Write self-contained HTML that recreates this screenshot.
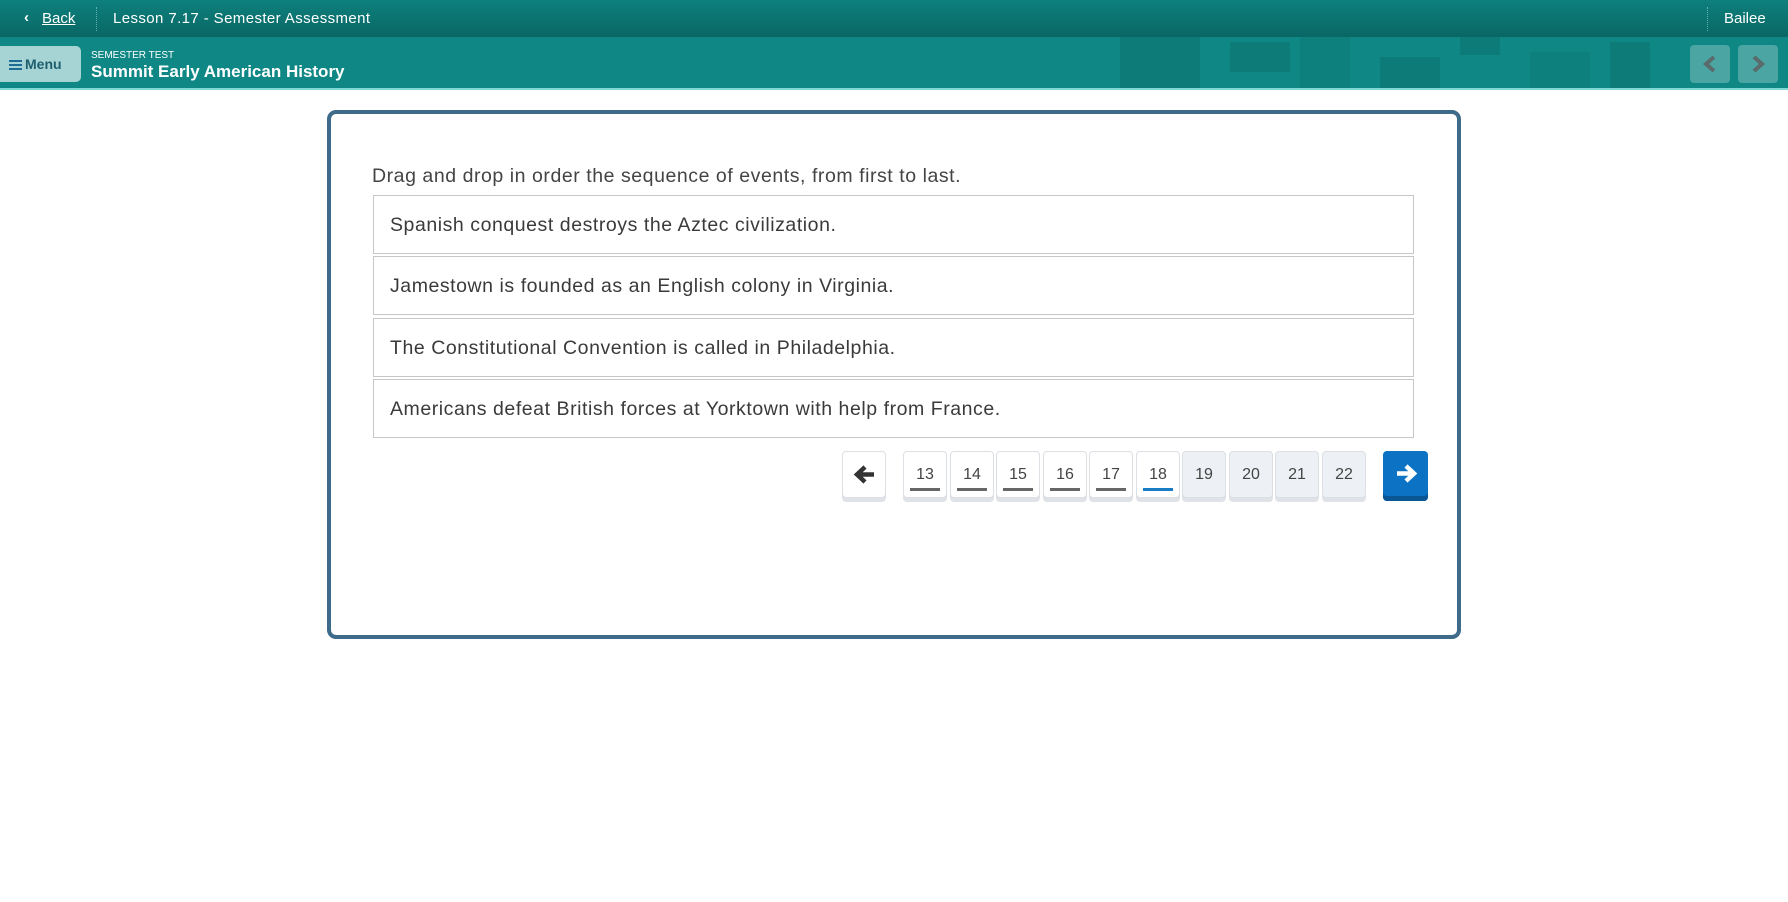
<!DOCTYPE html>
<html><head><meta charset="utf-8"><style>
*{box-sizing:border-box;margin:0;padding:0}
body{width:1788px;height:902px;background:#fff;font-family:"Liberation Sans",sans-serif;position:relative;overflow:hidden;color:#333}
.top{position:absolute;left:0;top:0;width:1788px;height:37px;background:linear-gradient(#0e807d,#096764);color:#fff;font-size:15px}
.sub{position:absolute;left:0;top:37px;width:1788px;height:53px;background:#0f8784;border-bottom:2px solid #7fd8d6;overflow:hidden}
.patch{position:absolute;background:#0b6f6d;opacity:.45}
.card{position:absolute;left:327px;top:110px;width:1134px;height:529px;border:4px solid #3e6b8a;border-radius:9px}
.opt{position:absolute;left:373px;width:1041px;height:59px;border:1px solid #c6c6c6;font-size:19.5px;letter-spacing:0.55px;line-height:58px;padding-left:16px;color:#3a3a3a}
.nb{position:absolute;top:451px;width:44px;height:47px;border:1px solid #dcdfe3;border-radius:4px;background:#fff;box-shadow:0 4px 0 #dfe2e6;font-size:16px;text-align:center;line-height:45px;color:#444}
.nb.u{background:#edf0f4}
.nb .l{position:absolute;left:6px;right:6px;bottom:6px;height:3px;background:#666}
.arr{position:absolute;top:45px;width:40px;height:38px;background:rgba(255,255,255,.25);border-radius:4px}
</style></head><body>
<div class="top">
 <span style="position:absolute;left:24px;top:9px;font-weight:bold">&#8249;</span>
 <span style="position:absolute;left:42px;top:10px;text-decoration:underline">Back</span>
 <span style="position:absolute;left:96px;top:7px;height:24px;border-left:1px dotted #5fb3b1"></span>
 <span style="position:absolute;left:113px;top:10px;letter-spacing:0.4px">Lesson 7.17 - Semester Assessment</span>
 <span style="position:absolute;left:1707px;top:7px;height:24px;border-left:1px dotted #5fb3b1"></span>
 <span style="position:absolute;left:1724px;top:10px">Bailee</span>
</div>
<div class="sub">
 <div class="patch" style="left:1120px;top:0;width:80px;height:53px"></div>
 <div class="patch" style="left:1230px;top:5px;width:60px;height:30px"></div>
 <div class="patch" style="left:1300px;top:0;width:50px;height:53px;opacity:.3"></div>
 <div class="patch" style="left:1380px;top:20px;width:60px;height:33px"></div>
 <div class="patch" style="left:1460px;top:0;width:40px;height:18px"></div>
 <div class="patch" style="left:1530px;top:15px;width:60px;height:38px;opacity:.3"></div>
 <div class="patch" style="left:1610px;top:5px;width:40px;height:48px"></div>
 <div style="position:absolute;left:0;top:9px;width:81px;height:36px;background:#a6d3d4;border-radius:0 5px 5px 0;color:#1e5f6e;font-weight:bold;font-size:14px;line-height:36px;padding-left:9px">
  <span style="display:inline-block;width:13px;height:10px;border-top:2px solid #1e6c96;border-bottom:2px solid #1e6c96;position:relative;vertical-align:-1px;margin-right:3px"><span style="position:absolute;left:0;top:2px;width:13px;height:2px;background:#1e6c96"></span></span>Menu</div>
 <div style="position:absolute;left:91px;top:13px;color:#fff;font-size:10px">SEMESTER TEST</div>
 <div style="position:absolute;left:91px;top:25px;color:#fff;font-size:17px;font-weight:bold">Summit Early American History</div>
 <div class="arr" style="left:1690px;top:8px"><svg width="40" height="38"><path d="M24 12 L16 19 L24 26" stroke="#5b6b6b" stroke-width="4" fill="none"/></svg></div>
 <div class="arr" style="left:1738px;top:8px"><svg width="40" height="38"><path d="M16 12 L24 19 L16 26" stroke="#5b6b6b" stroke-width="4" fill="none"/></svg></div>
</div>
<div class="card"></div>
<div style="position:absolute;left:372px;top:165px;font-size:19.5px;letter-spacing:0.55px;color:#444">Drag and drop in order the sequence of events, from first to last.</div>
<div class="opt" style="top:195px">Spanish conquest destroys the Aztec civilization.</div>
<div class="opt" style="top:256px">Jamestown is founded as an English colony in Virginia.</div>
<div class="opt" style="top:318px">The Constitutional Convention is called in Philadelphia.</div>
<div class="opt" style="top:379px">Americans defeat British forces at Yorktown with help from France.</div>
<div class="nb" style="left:842px"><svg width="44" height="45"><path d="M31 22.5H17M22 15l-8 7.5 8 7.5" stroke="#333" stroke-width="4.5" fill="none"/></svg></div>
<div class="nb" style="left:903px">13<div class="l"></div></div>
<div class="nb" style="left:950px">14<div class="l"></div></div>
<div class="nb" style="left:996px">15<div class="l"></div></div>
<div class="nb" style="left:1043px">16<div class="l"></div></div>
<div class="nb" style="left:1089px">17<div class="l"></div></div>
<div class="nb" style="left:1136px">18<div class="l" style="background:#1a7cc4"></div></div>
<div class="nb u" style="left:1182px">19</div>
<div class="nb u" style="left:1229px">20</div>
<div class="nb u" style="left:1275px">21</div>
<div class="nb u" style="left:1322px">22</div>
<div style="position:absolute;left:1383px;top:451px;width:45px;height:50px;background:#0b72c4;border-radius:4px;box-shadow:inset 0 -5px 0 #0a5594"><svg width="45" height="45"><path d="M14 22.5H28M23 15l8 7.5-8 7.5" stroke="#fff" stroke-width="4.5" fill="none"/></svg></div>
</body></html>
